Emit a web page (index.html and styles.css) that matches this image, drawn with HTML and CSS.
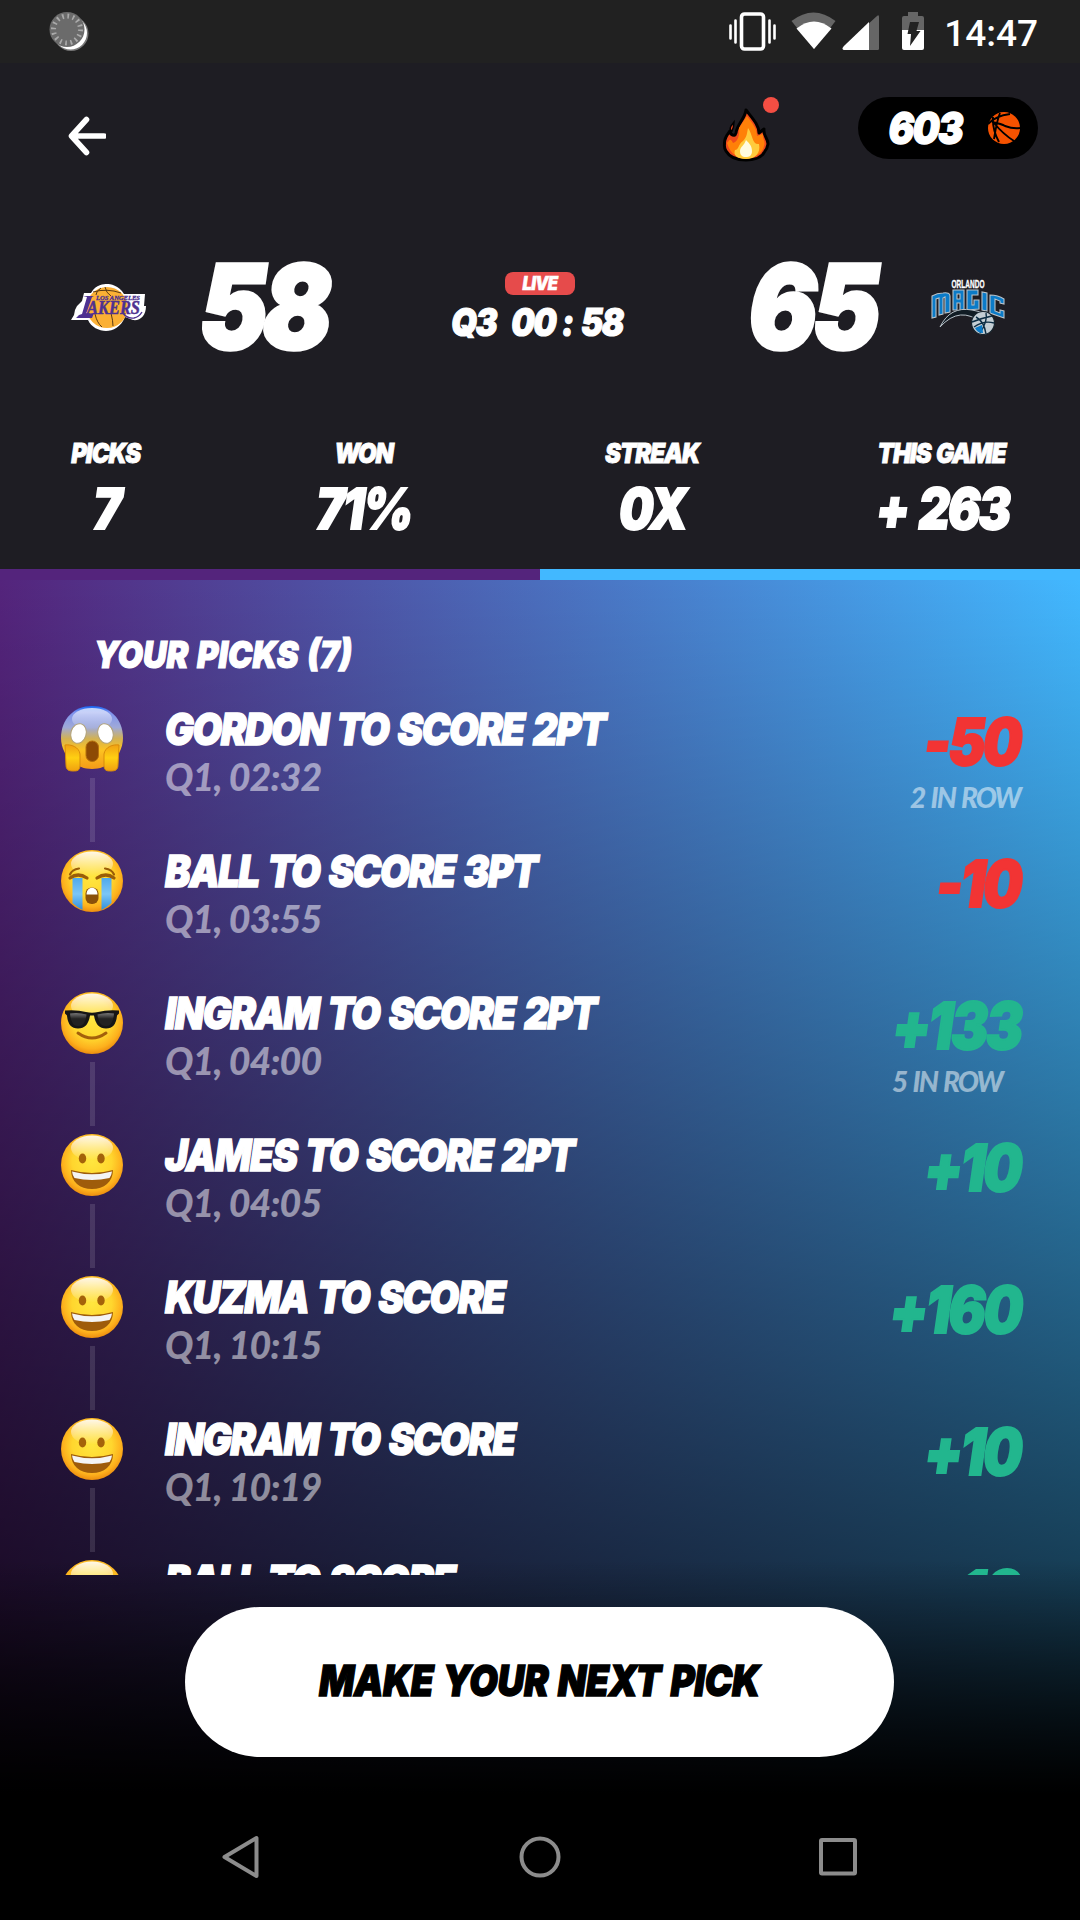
FILE: index.html
```
<!DOCTYPE html>
<html lang="en">
<head>
<meta charset="utf-8">
<title>Your picks</title>
<link rel="stylesheet" href="styles.css">
</head>
<body>
<svg class="defs" aria-hidden="true">
  <defs>
    <radialGradient id="skin" cx=".5" cy=".44" r=".58">
      <stop offset="0" stop-color="#ffe63f"/><stop offset=".55" stop-color="#ffd62e"/><stop offset=".82" stop-color="#fdb01d"/><stop offset="1" stop-color="#e8850c"/>
    </radialGradient>
    <linearGradient id="shine" x1="0" y1="0" x2="0" y2="1">
      <stop offset="0" stop-color="#fff" stop-opacity=".9"/><stop offset="1" stop-color="#fff" stop-opacity="0"/>
    </linearGradient>
    <linearGradient id="fear" x1="0" y1="0" x2="0" y2="1">
      <stop offset="0" stop-color="#1565f5"/><stop offset=".1" stop-color="#7d92ee"/><stop offset=".34" stop-color="#9fa9d8"/><stop offset=".52" stop-color="#d3b252"/><stop offset=".7" stop-color="#fdc321"/><stop offset="1" stop-color="#f39a17"/>
    </linearGradient>
    <linearGradient id="hand" x1="0" y1="0" x2="0" y2="1">
      <stop offset="0" stop-color="#f0a013"/><stop offset=".5" stop-color="#ffd012"/><stop offset="1" stop-color="#f0a010"/>
    </linearGradient>
    <linearGradient id="tear" x1="0" y1="0" x2="0" y2="1">
      <stop offset="0" stop-color="#4fa9ec"/><stop offset=".5" stop-color="#7cc6f6"/><stop offset="1" stop-color="#2f8fdd"/>
    </linearGradient>
    <linearGradient id="lens" x1="0" y1="0" x2="0" y2="1">
      <stop offset="0" stop-color="#777"/><stop offset=".45" stop-color="#222"/><stop offset="1" stop-color="#222"/>
    </linearGradient>
    <g id="face">
      <circle cx="31" cy="31" r="31" fill="url(#skin)"/>
      <ellipse cx="31" cy="14" rx="21" ry="12.500" fill="url(#shine)"/>
    </g>
    <symbol id="grin" viewBox="0 0 62 62">
      <use href="#face"/>
      <ellipse cx="21.500" cy="24.500" rx="3.700" ry="5" fill="#a4620a"/><ellipse cx="40" cy="24.500" rx="3.700" ry="5" fill="#a4620a"/>
      <path d="M10 36q21 6 42 0c0 12-9 19-21 19s-21-7-21-19z" fill="#9e5c0b"/>
      <path d="M11 37.500q20 5.500 40 0-.5 4-2.500 6.500-17.500 4-35 0-2-2.500-2.500-6.500z" fill="#f4f4f4"/>
    </symbol>
    <symbol id="cry" viewBox="0 0 62 62">
      <use href="#face"/>
      <path d="M11.500 28h10v32q-5-2.500-10-7z" fill="url(#tear)"/><path d="M40.500 28h10v25q-5 4.500-10 7z" fill="url(#tear)"/>
      <path d="M9 28q8-6 17 0M36 28q9-6 17 0" fill="none" stroke="#9a5d08" stroke-width="3.200" stroke-linecap="round"/>
      <path d="M9 24.500q2-5 9-6M44 18.500q7 1 9 6" fill="none" stroke="#9a5d08" stroke-width="2.200" stroke-linecap="round"/>
      <rect x="24.500" y="37.500" width="13" height="16.500" rx="6" fill="#8a500a"/><path d="M25.500 44.500c0-9 11-9 11 0z" fill="#fff"/>
    </symbol>
    <symbol id="cool" viewBox="0 0 62 62">
      <use href="#face"/>
      <path d="M17 41q14 10 28 0" fill="none" stroke="#a4600b" stroke-width="3" stroke-linecap="round"/>
      <path d="M4 18.500q12-1 21 1.500 6 1.500 12 0 9-2.500 21-1.500v3l-2 2q-1 13-11 13-10 0-12-13h-4q-2 13-12 13-10 0-11-13l-2-2z" fill="#161616"/>
      <path d="M9 21.500q8-1.500 16.500 1-1 11.500-8.500 11.500-7 0-8-12.500z" fill="url(#lens)"/><path d="M53 21.500q-8-1.500-16.500 1 1 11.500 8.500 11.500 7 0 8-12.500z" fill="url(#lens)"/>
    </symbol>
    <symbol id="scream" viewBox="0 0 62 62" overflow="visible">
      <path d="M31-2c18 0 31 13 31 32 0 15-12 31-31 31S0 45 0 30C0 11 13-2 31-2z" fill="url(#fear)"/>
      <ellipse cx="31" cy="11" rx="20" ry="11" fill="url(#shine)" opacity=".8"/>
      <ellipse cx="17.500" cy="25.500" rx="7.600" ry="10" fill="#fff" stroke="#b2a277" transform="rotate(16 17.500 25.500)"/><ellipse cx="44.500" cy="25.500" rx="7.600" ry="10" fill="#fff" stroke="#b2a277" transform="rotate(-16 44.500 25.500)"/>
      <rect x="25" y="33" width="12.500" height="20.500" rx="6.200" fill="#8d4a04" stroke="#b5700c"/>
      <path d="M4 37c6-1 14 2 15 9v11c0 6-3 6-7 6s-7-1-7-6z" fill="url(#hand)" stroke="#d88b0c"/><path d="M58 37c-6-1-14 2-15 9v11c0 6 3 6 7 6s7-1 7-6z" fill="url(#hand)" stroke="#d88b0c"/>
    </symbol>
  </defs>
</svg>

<div class="screen">
  <div class="status">
    <svg class="status-sync" width="40" height="40" viewBox="0 0 40 40">
      <circle cx="22" cy="21.500" r="17.500" fill="#777"/><circle cx="21.500" cy="21" r="16.500" fill="#fff"/>
      <circle cx="18" cy="17.500" r="17.500" fill="#6b6b6b"/>
      <circle cx="18" cy="17.500" r="13.500" fill="none" stroke="#aaa" stroke-width="5" stroke-dasharray="1.700 3.602"/>
    </svg>
    <svg class="status-icons" width="200" height="40" viewBox="0 0 200 40">
      <rect x="12.500" y="2" width="22" height="35" rx="3" fill="none" stroke="#fff" stroke-width="3.600"/>
      <path d="M6.500 8.500v22M1.500 13.500v13M40.500 8.500v22M45.500 13.500v13" stroke="#fff" stroke-width="2.600" stroke-linecap="round"/>
      <path d="M62.500 9q22-17 44 0L85 37z" fill="#666"/><path d="M67.500 16.500q17.500-14 35 0L85 37z" fill="#fff"/>
      <path d="M115 38q-3-1 0-4L148 4q2-2 2 1v32q0 1-1.500 1z" fill="#666"/><path d="M115 38q-3-1 0-4L140 10v28z" fill="#fff"/>
      <path d="M179 0h10v4h4q2 0 2 2v12h-22V6q0-2 2-2h4z" fill="#666"/><path d="M173 18h22v18q0 2-2 2h-18q-2 0-2-2z" fill="#fff"/>
      <path d="M181 10h9l-2.500 9h4L181 34l1-12h-3.500z" fill="#222"/>
    </svg>
    <span class="clock">14:47</span>
  </div>

  <header class="topbar">
    <svg class="back" width="40" height="40" viewBox="0 0 40 40"><path d="M20.500 3.500 5.500 20l15 16.500M6 20h32" fill="none" stroke="#fff" stroke-width="5.600" stroke-linecap="round" stroke-linejoin="round"/></svg>
    <div class="topbar-right">
      <div class="fire">
        <svg width="50" height="56" viewBox="7 19 50 56">
          <path d="M31 21C37 29 44 36 44 44L49 40C48 47 53 49 53 55Q52 60 50 62 46 71 31 71 16 71 11 62 9 59 9.500 55C9 49 12 46 15 42L16 45Q20 48 21 44C22 35 30 30 31 21z" fill="#ee4a1c" stroke="#000" stroke-width="3" stroke-linejoin="round"/>
          <path d="M19 33q0 5-2 9-3-1-1-5z" fill="#e8401d" stroke="#000" stroke-width="1.500"/>
          <path d="M32 27C37 34 42 39 42 47L48 45C47 50 51 52 49 57 47 68 31 70 31 70 18 69 14 60 12 54 14 52 15 48 18 54 22 53 25 48 24 39 31 34 32 27z" fill="#ff8008"/>
          <path d="M33 39C38 46 37 56 44 55 46 64 40 70 31 70 22 70 18 66 20 61 24 61 23 55 28 52 32 48 32 44 33 39z" fill="#ffcb3d"/>
          <path d="M31 51C34 54 37 57 37 62 37 67 34 68 31 68 27 68 25 66 25 62 25 58 29 57 31 51z" fill="#fffbe0"/>
        </svg>
        <span class="dot"></span>
      </div>
      <div class="coins">
        <span class="hv coins-n">603</span>
        <svg width="32" height="32" viewBox="0 0 32 32"><circle cx="16" cy="16" r="16" fill="#f65200"/><path d="M0 12Q7 4 22 2M12 1Q9 8 6 27M5 5q-1 12 6 25M4 10q10 2 13 4 8 3 15 2M6 11q9 11 20 18" fill="none" stroke="#000" stroke-width="1.900"/></svg>
      </div>
    </div>
  </header>

  <section class="score">
    <svg class="logo logo-home" width="76" height="56" viewBox="0 0 76 56">
      <path d="M12 22 14 14h7C26 5 34 5 37 5s12 1 17 10h21l-1 12h2c0 10-6 15-13 14l-8-3C51 48 43 52 36 52S21 48 18 41H1l3-5 1-5 2-4z" fill="#fff"/>
      <circle cx="37" cy="28.500" r="20.500" fill="#fbb034"/>
      <path d="M23 13q14-4 28 1M35 8q1 6 6 9M25 35q2 9 7 13M41 34q2 8 2 13M31 9q-5 3-5 7" fill="none" stroke="#5a3a14" stroke-width="1"/>
      <path d="M13 17h11l-2 1-6 17 8-1-2 5H6l3-3 3-1 5-17z" fill="#4e3190"/>
      <text class="lakers" x="17" y="34.500" textLength="53" lengthAdjust="spacingAndGlyphs">AKERS</text>
      <text class="lakers-city" x="26" y="21" textLength="44" lengthAdjust="spacingAndGlyphs">LOS ANGELES</text>
      <path d="M53 34q4 6 11 5 5-1 8-6" fill="none" stroke="#4e3190" stroke-width="1.400"/>
    </svg>
    <span class="hv pts pts-home">58</span>
    <div class="live">
      <span class="badge"><span class="hv badge-t">LIVE</span></span>
      <div class="clockline"><span class="hv">Q3</span><span class="hv">00</span><span class="hv colon">:</span><span class="hv">58</span></div>
    </div>
    <span class="hv pts pts-away">65</span>
    <svg class="logo" width="76" height="56" viewBox="0 0 76 56">
      <text class="magic-city" x="21.500" y="8.500" textLength="33" lengthAdjust="spacingAndGlyphs">ORLANDO</text>
      <path d="M0 17q11-4 22-6 15-3 30 0 12 2 24 6v22q-9-4-20-6H20q-11 2-20 6z" fill="#1e1d23"/>
      <path d="M2 39V17q5-3 11-3 7-1 7 3v16l-5 1V18l-2 1v16l-4 1V19l-3 1v18zM23 31V11h11v20h-4v-7h-3v7zM27 15v5h3v-5zM37 31V11h11v5h-6v10h2v-5h5v9zM52 31V13l5 1v18zM60 34V16q8 0 14 4v5l-4-1v-2l-5-2v12l5 2v-3l4 1v7z" fill="#0b7bc8" stroke="#b8c2c9" stroke-width="1.100"/>
      <path d="M10 48Q20 27 42 31q10 1 16 6l-6 7Q30 26 10 48z" fill="#111c24" stroke="#b8c2c9" stroke-width="1"/>
      <circle cx="53" cy="44" r="11.500" fill="#c4ced4" stroke="#16242d" stroke-width="1.200"/>
      <path d="M44 48q10-7 20-4M46 38q8 4 10 17M56 34q2 8-6 20M42 43q10-4 20-6" fill="none" stroke="#0c2d43" stroke-width="1.400"/><path d="M45 49l7-3 1 8q-6 0-8-5z" fill="#0b7bc8"/>
    </svg>
  </section>

  <section class="stats">
    <div class="stat"><span class="hv lab">PICKS</span><span class="hv val">7</span></div>
    <div class="stat"><span class="hv lab">WON</span><span class="hv val">71%</span></div>
    <div class="stat"><span class="hv lab">STREAK</span><span class="hv val">0X</span></div>
    <div class="stat stat-wide"><span class="hv lab">THIS GAME</span><span class="hv val">+ 263</span></div>
  </section>

  <div class="teambar"><i class="home"></i><i class="away"></i></div>

  <main class="picks">
    <h2><span class="hv">YOUR PICKS (7)</span></h2>
    <div class="list">
      <div class="pick"><div class="mood linked"><svg class="emoji"><use href="#scream"/></svg></div><div class="what"><span class="hv title">GORDON TO SCORE 2PT</span><span class="time">Q1, 02:32</span></div><div class="gain"><span class="hv amount loss">-50</span><span class="row">2 IN ROW</span></div></div>
      <div class="pick"><div class="mood"><svg class="emoji"><use href="#cry"/></svg></div><div class="what"><span class="hv title">BALL TO SCORE 3PT</span><span class="time">Q1, 03:55</span></div><div class="gain"><span class="hv amount loss">-10</span></div></div>
      <div class="pick"><div class="mood linked"><svg class="emoji"><use href="#cool"/></svg></div><div class="what"><span class="hv title">INGRAM TO SCORE 2PT</span><span class="time">Q1, 04:00</span></div><div class="gain"><span class="hv amount">+133</span><span class="row five">5 IN ROW</span></div></div>
      <div class="pick"><div class="mood linked"><svg class="emoji"><use href="#grin"/></svg></div><div class="what"><span class="hv title">JAMES TO SCORE 2PT</span><span class="time">Q1, 04:05</span></div><div class="gain"><span class="hv amount">+10</span></div></div>
      <div class="pick"><div class="mood linked"><svg class="emoji"><use href="#grin"/></svg></div><div class="what"><span class="hv title">KUZMA TO SCORE</span><span class="time">Q1, 10:15</span></div><div class="gain"><span class="hv amount">+160</span></div></div>
      <div class="pick"><div class="mood linked"><svg class="emoji"><use href="#grin"/></svg></div><div class="what"><span class="hv title">INGRAM TO SCORE</span><span class="time">Q1, 10:19</span></div><div class="gain"><span class="hv amount">+10</span></div></div>
      <div class="pick"><div class="mood"><svg class="emoji"><use href="#grin"/></svg></div><div class="what"><span class="hv title">BALL TO SCORE</span></div><div class="gain"><span class="hv amount">+10</span></div></div>
    </div>
    <button class="next"><span class="hv">MAKE YOUR NEXT PICK</span></button>
  </main>

  <nav class="nav">
    <svg width="44" height="44" viewBox="0 0 44 44"><path d="M37.500 3v38L5.500 22z"/></svg>
    <svg width="44" height="44" viewBox="0 0 44 44"><circle cx="22" cy="22" r="18.500"/></svg>
    <svg width="44" height="44" viewBox="0 0 44 44"><rect x="4" y="5" width="34" height="33.500" rx="1"/></svg>
  </nav>
</div>
</body>
</html>
```
FILE: styles.css
```
* { box-sizing: border-box; }

body {
  margin: 0;
  background: #000;
  color: #fff;
  font-family: Lato, "Noto Sans", sans-serif;
}

.defs { display: block; width: 0; height: 0; }

.screen {
  width: 1080px;
  height: 1920px;
  display: flex;
  flex-direction: column;
  overflow: hidden;
  background: #1e1d23;
}

/* heavy slanted display face, condensed */
.hv {
  display: inline-block;
  font-family: Inter, Lato, sans-serif;
  font-weight: 900;
  font-style: italic;
  letter-spacing: -0.045em;
  word-spacing: .07em;
  white-space: pre;
  -webkit-text-stroke: .032em currentColor;
  transform: scaleX(.87);
  transform-origin: center;
}

/* status bar */
.status {
  height: 63px;
  padding: 12px 42px 0 49px;
  display: flex;
  align-items: flex-start;
  background: #212121;
}
.status-icons { margin-left: auto; }
.clock {
  margin-left: 15px;
  font: 500 37px/43px Roboto, sans-serif;
}

/* top bar */
.topbar {
  height: 147px;
  padding: 34px 42px 0 66px;
  display: flex;
  justify-content: space-between;
  align-items: flex-start;
}
.back { margin-top: 19px; }
.topbar-right { display: flex; gap: 86px; }
.fire { position: relative; width: 50px; height: 70px; padding-top: 11px; }
.dot {
  position: absolute;
  left: 41px;
  top: 0;
  width: 16px;
  height: 16px;
  border-radius: 50%;
  background: #f44e43;
}
.coins {
  width: 180px;
  height: 62px;
  padding-right: 18px;
  display: flex;
  align-items: center;
  justify-content: flex-end;
  gap: 21px;
  border-radius: 31px;
  background: #000;
}
.coins-n { font-size: 44px; line-height: 62px; }

/* scoreboard */
.score {
  height: 193px;
  padding: 0 74px 0 70px;
  display: grid;
  grid-template-columns: 76px 235px 314px 235px 76px;
  align-items: center;
}
.pts { font-size: 117px; line-height: 120px; justify-self: center; }
.live { display: flex; flex-direction: column; align-items: center; gap: 8px; padding-left: 4px; }
.badge {
  width: 70px;
  height: 23px;
  border-radius: 8px;
  background: #e64b4b;
  display: grid;
  place-items: center;
}
.badge-t { font-size: 19px; line-height: 22px; }
.clockline { margin-right: 6px; display: flex; gap: 8px; font-size: 38px; line-height: 38px; }
.colon { margin: 0 -4px 0 -5px; }
.lakers { font: italic 700 18px "Liberation Serif", serif; fill: #4e3190; stroke: #4e3190; stroke-width: .5; }
.lakers-city { font: italic 700 6.500px "Liberation Serif", serif; fill: #4e3190; stroke: #4e3190; stroke-width: .3; }
.magic-city { font: 700 10px "Liberation Sans", sans-serif; fill: #fff; stroke: #fff; stroke-width: .3; }

/* game stats */
.stats {
  height: 166px;
  padding: 33px 56px 0;
  display: grid;
  grid-template-columns: 258px 288px 270px 140px;
}
.stat { width: 100px; display: flex; flex-direction: column; align-items: center; gap: 9px; }
.stat-wide { width: 140px; }
.lab { font-size: 27.500px; line-height: 34px; }
.val { font-size: 56px; line-height: 60px; }

.teambar { height: 11px; display: grid; grid-template-columns: 1fr 1fr; }
.home { background: #54247c; }
.away { background: #42b8ff; }

/* picks */
.picks {
  height: 1214px;
  padding-top: 51px;
  display: flex;
  flex-direction: column;
  background:
    linear-gradient(180deg, rgba(0,0,0,0) 980px, #000 1214px),
    linear-gradient(180deg, rgba(0,0,0,0) 0, #000 1500px),
    linear-gradient(90deg, #54247c, #42b8ff);
}
h2 { margin: 0 0 23px 94px; font-size: 37.500px; line-height: 46px; }
h2 .hv { letter-spacing: 0; transform-origin: left; }
.list { height: 874px; overflow: hidden; }
.pick {
  height: 142px;
  padding: 6px 60px 0 61px;
  display: grid;
  grid-template-columns: 62px 1fr auto;
}
.mood { padding-top: 1px; }
.emoji { display: block; width: 62px; height: 62px; overflow: visible; }
.linked::after {
  content: "";
  display: block;
  width: 5px;
  height: 64px;
  margin: 8px 0 0 29px;
  background: rgba(255,255,255,.12);
}
.what { padding-left: 42px; display: flex; flex-direction: column; align-items: flex-start; gap: 4px; }
.title { font-size: 44px; line-height: 44px; letter-spacing: -.036em; transform-origin: left; }
.time { font-weight: 900; font-style: italic; font-size: 37.500px; line-height: 44px; letter-spacing: -.850px; color: rgba(255,255,255,.5); }
.gain { padding-top: 3px; display: flex; flex-direction: column; align-items: flex-end; gap: 6px; }
.amount { font-size: 64px; line-height: 64px; color: #22b68e; transform-origin: right; }
.loss { color: #f23434; }
.row { font-weight: 900; font-style: italic; font-size: 28px; line-height: 34px; letter-spacing: -1.900px; word-spacing: 2px; color: rgba(255,255,255,.5); }
.five { margin-right: 18px; }

.next {
  width: 709px;
  height: 150px;
  margin: 32px 0 0 185px;
  padding: 0 0 4px;
  border: 0;
  border-radius: 75px;
  background: #fff;
  color: #000;
  font-size: 42.500px;
}
.next .hv { letter-spacing: -.01em; }

.nav {
  flex: 1;
  padding-left: 219px;
  display: flex;
  gap: 255px;
  align-items: center;
  background: #000;
}
.nav svg { fill: none; stroke: #8c8c8c; stroke-width: 4; stroke-linejoin: round; }
```
